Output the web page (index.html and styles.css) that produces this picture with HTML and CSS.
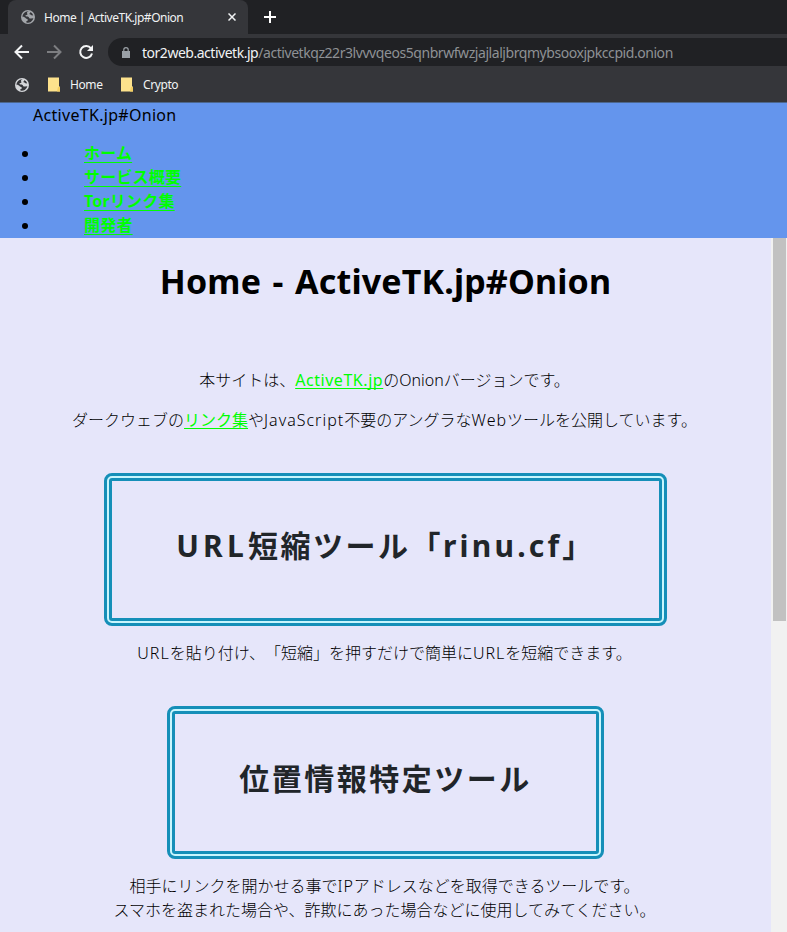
FILE: index.html
```
<!DOCTYPE html>
<html lang="ja">
<head>
<meta charset="utf-8">
<title>Home | ActiveTK.jp#Onion</title>
<link rel="stylesheet" href="styles.css">
</head>
<body>
<svg width="0" height="0" class="defs">
  <symbol id="globe" viewBox="0 0 14 14">
    <circle cx="7" cy="7" r="7" fill="currentColor"/>
    <path class="land" d="M7.800 1.300C5.800 2 5.600 3 6.300 3.700c.6.700-.4 1.300-1.500 1.500-.8.300-.3 1.200.8 1.200 1.700-.1 2.300.5 2.400 1.400.1.900 1 .8 2 .6l2.400-.1A5.700 5.700 0 0 1 5.400 12.500v-1.400c.9-.1 1.600-.5 1.400-1.400-.2-.8-1.200-.7-1.800-1.300C4 7.200 2.800 6.600 1.300 6.700l.1 1A5.700 5.700 0 0 1 7.800 1.300Z"/>
    <path class="land" d="M9.200 2c.2.800-.1 1.300-.7 1.600-.5.500.1 1 .8.900.9-.1.900.8 1.700.9l1.200-.1A5.600 5.600 0 0 0 9.200 2Z"/>
  </symbol>
  <symbol id="folder" viewBox="0 0 13 15">
    <path d="M0 .5h11v9h1v5H0Z" fill="#fde28c"/>
    <path d="M10 10h2v4.500H9Z" fill="#f5cf62"/>
  </symbol>
</svg>
<div class="tabstrip">
  <div class="tab">
    <svg class="globe dim"><use href="#globe"/></svg>
    <span class="tab-title">Home | ActiveTK.jp#Onion</span>
    <svg class="close" viewBox="0 0 8 8"><path d="M.5.5l7 7M7.500.5l-7 7"/></svg>
  </div>
  <svg class="plus" viewBox="0 0 12 12"><path d="M6 0v12M0 6h12"/></svg>
</div>
<div class="toolbar">
  <svg class="nav" viewBox="0 0 16 16"><path d="M15 8H2M8 1.500L1.500 8 8 14.500"/></svg>
  <svg class="nav off" viewBox="0 0 16 16"><path d="M1 8h13M8 1.500L14.500 8 8 14.500"/></svg>
  <svg class="nav" viewBox="0 0 16 16"><path d="M13 4.300A6 6 0 1 0 14 9.500"/><path class="solid" d="M15 1v6H9Z"/></svg>
  <div class="omnibox">
    <svg class="lock" viewBox="0 0 8 11"><path d="M0 4h8v7H0Z"/><path class="shackle" d="M1.800 4.500V2.800a2.200 2.200 0 0 1 4.400 0v1.700"/></svg>
    <span class="url"><span class="host">tor2web.activetk.jp</span><span class="path">/activetkqz22r3lvvvqeos5qnbrwfwzjajlaljbrqmybsooxjpkccpid.onion</span></span>
  </div>
</div>
<div class="bookmarks">
  <svg class="globe"><use href="#globe"/></svg>
  <svg class="folder"><use href="#folder"/></svg><span class="bm home">Home</span>
  <svg class="folder"><use href="#folder"/></svg><span class="bm">Crypto</span>
</div>
<header>
  <div class="brand">ActiveTK.jp#Onion</div>
  <ul>
    <li><a>ホーム</a></li>
    <li><a>サービス概要</a></li>
    <li><a>Torリンク集</a></li>
    <li><a>開発者</a></li>
  </ul>
</header>
<div class="viewport">
  <main>
    <h1>Home - ActiveTK.jp#Onion</h1>
    <p class="intro">本サイトは、<a class="site">ActiveTK.jp</a>のOnionバージョンです。</p>
    <p class="second">ダークウェブの<a>リンク集</a>や<span class="latin">JavaScript</span>不要のアングラな<span class="latin">Web</span>ツールを公開しています。</p>
    <div class="box first"><span class="wide">URL</span>短縮ツール「<span class="rinu">rinu.cf</span>」</div>
    <p class="desc"><span class="latin">URL</span>を貼り付け、「短縮」を押すだけで簡単に<span class="latin">URL</span>を短縮できます。</p>
    <div class="box">位置情報特定ツール</div>
    <p class="desc">相手にリンクを開かせる事で<span class="latin">IP</span>アドレスなどを取得できるツールです。<br>スマホを盗まれた場合や、詐欺にあった場合などに使用してみてください。</p>
  </main>
  <div class="scrollbar"><div class="thumb"></div></div>
</div>
</body>
</html>
```
FILE: styles.css
```
* { box-sizing: border-box; }
body {
  margin: 0;
  height: 932px;
  overflow: hidden;
  display: flex;
  flex-direction: column;
  font-family: "Noto Sans", "Noto Sans CJK JP", sans-serif;
  text-spacing-trim: space-all;
  background: #e6e6fa;
}
svg { flex: none; fill: none; }
.defs { position: absolute; }
.tabstrip { flex: none; height: 34px; background: #202124; display: flex; align-items: center; padding-left: 8px; }
.tab {
  width: 240px;
  height: 34px;
  padding: 0 12px 0 13px;
  display: flex;
  align-items: center;
  border-radius: 8px 8px 0 0;
  background: #35363a;
  color: #f1f3f4;
}
.globe { width: 14px; height: 14px; color: #d5d7da; }
.globe.dim { color: #a3a6aa; }
.land { fill: #35363a; }
.tab-title { margin-left: 9px; flex: 1; font-size: 12px; letter-spacing: -0.48px; white-space: nowrap; }
.close { width: 8px; height: 8px; stroke: #f1f3f4; stroke-width: 1.5; }
.plus { width: 12px; height: 12px; margin-left: 16px; stroke: #fff; stroke-width: 2; }
.toolbar { flex: none; height: 36px; background: #35363a; display: flex; align-items: center; padding-left: 14px; }
.nav { width: 16px; height: 16px; margin-right: 16px; stroke: #f4f5f6; stroke-width: 2; }
.nav.off { stroke: #7d7e81; }
.solid { fill: #f4f5f6; stroke: none; }
.omnibox {
  flex: 1;
  height: 28px;
  margin-left: -2px;
  padding-left: 14px;
  border-radius: 14px 0 0 14px;
  background: #202124;
  display: flex;
  align-items: center;
}
.lock { width: 8px; height: 11px; fill: #9aa0a6; }
.shackle { fill: none; stroke: #9aa0a6; stroke-width: 1.2; }
.url { margin-left: 12px; font-size: 14px; white-space: nowrap; color: #8e9195; }
.host { color: #f1f3f4; letter-spacing: -0.48px; }
.path { letter-spacing: -0.44px; }
.bookmarks {
  flex: none;
  height: 33px;
  padding: 0 0 3px 15px;
  border-bottom: 1px solid #4c678f;
  background: #35363a;
  color: #f1f3f4;
  display: flex;
  align-items: center;
  font-size: 12px;
  letter-spacing: -0.4px;
}
.folder { width: 13px; height: 15px; margin: 0 9px 0 19px; }
.bm.home { width: 32px; }
header { flex: none; height: 135px; background: #6495ed; color: #000; line-height: 24px; }
.brand { height: 38px; padding-left: 33px; font-size: 16px; letter-spacing: 0.3px; }
ul { margin: 0; padding-left: 40px; }
li { height: 24px; padding-left: 44px; }
a {
  color: #00ff00;
  font-weight: 400;
  text-decoration: underline;
  text-decoration-thickness: 1px;
  text-decoration-skip-ink: none;
  text-underline-offset: 2px;
}
li a { font-weight: 700; text-underline-offset: 3px; letter-spacing: 0.2px; }
.viewport { flex: 1; min-height: 0; display: flex; }
main { width: 771px; text-align: center; line-height: 24px; font-size: 16px; overflow: hidden; white-space: nowrap; }
h1 { margin: 19px 0 0; height: 49px; font-size: 34px; line-height: 48px; letter-spacing: 0.15px; word-spacing: 2.5px; }
p { margin: 0; padding-right: 2px; font-weight: 300; }
.intro { margin-top: 62px; }
.second { margin-top: 16px; }
.site { letter-spacing: 0.55px; }
.latin { letter-spacing: 1px; }
.box {
  width: 437px;
  height: 153px;
  margin: 41px auto 0;
  padding-bottom: 7px;
  border: 8px double #158fb8;
  border-radius: 8px;
  background: linear-gradient(#e6e6fa, #e6e6fa) padding-box, linear-gradient(#c8f6fd, #c8f6fd) border-box;
  color: #212529;
  display: flex;
  align-items: center;
  justify-content: center;
  font-size: 30px;
  font-weight: 700;
  letter-spacing: 2.5px;
}
.box.first { width: 563px; }
.wide { letter-spacing: 4.2px; }
.rinu { letter-spacing: 3.2px; }
.desc { margin-top: 15px; }
.scrollbar { width: 16px; background: #f1f1f1; padding: 0 1px 0 2px; }
.thumb { height: 383px; background: #c1c1c1; }
```
